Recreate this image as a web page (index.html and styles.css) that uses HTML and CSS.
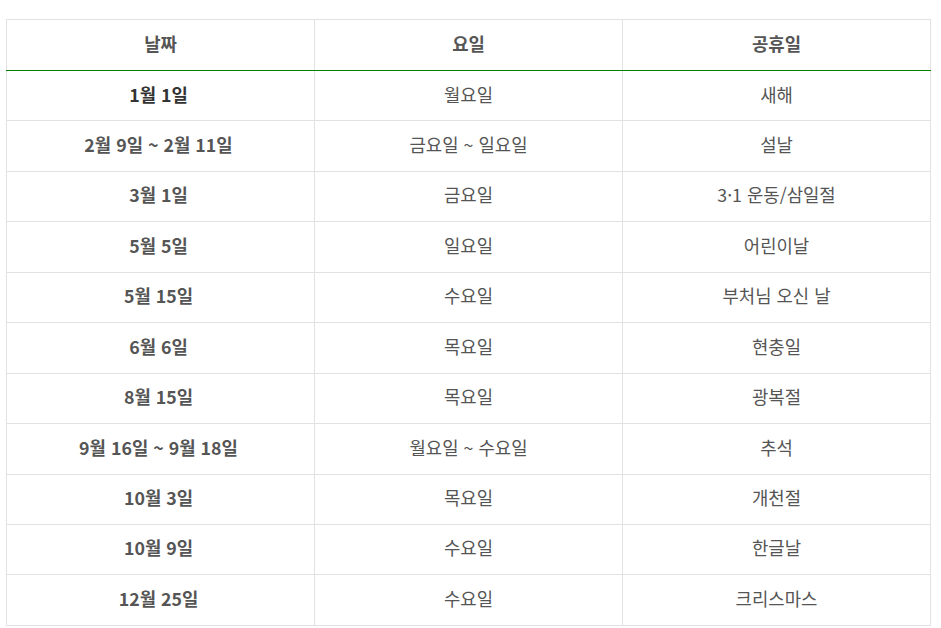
FILE: index.html
```html
<!DOCTYPE html>
<html lang="ko">
<head>
<meta charset="utf-8">
<link rel="stylesheet" href="styles.css">
</head>
<body>
<table class="holidays">
  <thead>
    <tr><th>날짜</th><th>요일</th><th>공휴일</th></tr>
  </thead>
  <tbody>
    <tr class="active"><td class="date">1월 1일</td><td>월요일</td><td>새해</td></tr>
    <tr><td class="date">2월 9일 ~ 2월 11일</td><td>금요일 ~ 일요일</td><td>설날</td></tr>
    <tr><td class="date">3월 1일</td><td>금요일</td><td>3·1 운동/삼일절</td></tr>
    <tr><td class="date">5월 5일</td><td>일요일</td><td>어린이날</td></tr>
    <tr><td class="date">5월 15일</td><td>수요일</td><td>부처님 오신 날</td></tr>
    <tr><td class="date">6월 6일</td><td>목요일</td><td>현충일</td></tr>
    <tr><td class="date">8월 15일</td><td>목요일</td><td>광복절</td></tr>
    <tr><td class="date">9월 16일 ~ 9월 18일</td><td>월요일 ~ 수요일</td><td>추석</td></tr>
    <tr><td class="date">10월 3일</td><td>목요일</td><td>개천절</td></tr>
    <tr><td class="date">10월 9일</td><td>수요일</td><td>한글날</td></tr>
    <tr><td class="date">12월 25일</td><td>수요일</td><td>크리스마스</td></tr>
  </tbody>
</table>
</body>
</html>
```
FILE: styles.css
```css
html, body {
  margin: 0;
  background: #fff;
}
body {
  padding: 19px 10px 0 6px;
  font-family: "Noto Sans CJK KR", "Noto Sans", sans-serif;
  font-size: 17.8px;
  color: #555;
}
.holidays {
  width: 925px;
  border-collapse: collapse;
  table-layout: fixed;
}
.holidays th,
.holidays td {
  border: 1px solid #e2e2e2;
  text-align: center;
  vertical-align: middle;
  padding: 0 0 3px;
  line-height: 1.2;
  height: 46.45px;
}
.holidays th {
  font-weight: 700;
  color: #555;
  height: 47px;
  border-bottom: 1px solid #008000;
}
.holidays td.date {
  font-weight: 700;
  color: #555;
  padding-right: 4px;
}
.holidays tr.active td.date {
  color: #333;
}
```
